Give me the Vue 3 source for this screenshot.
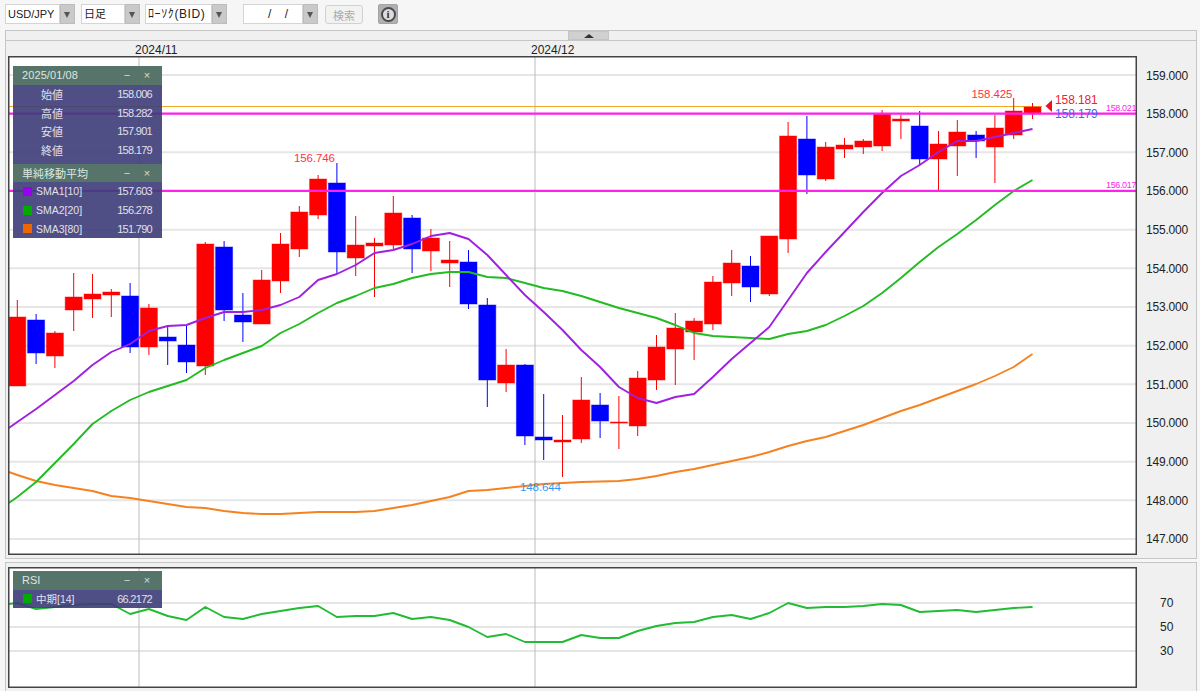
<script setup>
const step = 18.8
const xAt = (i) => 17.3 + i * step

// hi, body top, body bottom, lo, r/b  (pixel rows of the page)
const raw = [
  [300, 317, 386, 386, 'r'], [314, 320, 353, 364, 'b'], [331, 333, 356, 368, 'r'], [273, 297, 310, 331, 'r'],
  [274, 294, 299, 318, 'r'], [289, 292, 295, 317, 'r'], [283, 296, 347, 353, 'b'], [304, 308, 347, 355, 'r'],
  [325, 337, 341, 365, 'b'], [326, 345, 362, 373, 'b'], [242, 244, 366, 375, 'r'], [241, 247, 310, 321, 'b'],
  [293, 315, 322, 342, 'b'], [270, 280, 324, 324, 'r'], [233, 244, 281, 293, 'r'], [206, 212, 249, 257, 'r'],
  [175, 179, 215, 219, 'r'], [163, 183, 252, 274, 'b'], [216, 245, 258, 276, 'r'], [238, 243, 246, 297, 'r'],
  [196, 213, 245, 249, 'r'], [215, 218, 249, 273, 'b'], [229, 238, 251, 271, 'r'], [241, 260, 263, 287, 'r'],
  [250, 262, 304, 309, 'b'], [298, 305, 380, 407, 'b'], [349, 365, 383, 392, 'r'], [364, 365, 436, 445, 'b'],
  [394, 437, 440, 460, 'b'], [415, 440, 442, 477, 'r'], [377, 400, 439, 443, 'r'], [393, 405, 421, 438, 'b'],
  [396, 422, 423, 449, 'r'], [371, 378, 426, 436, 'r'], [335, 347, 380, 390, 'r'], [313, 328, 349, 385, 'r'],
  [318, 321, 332, 360, 'r'], [276, 282, 324, 330, 'r'], [250, 263, 283, 296, 'r'], [256, 266, 287, 302, 'b'],
  [236, 236, 294, 296, 'r'], [122, 136, 239, 253, 'r'], [116, 139, 175, 194, 'b'], [142, 147, 179, 181, 'r'],
  [138, 145, 149, 158, 'r'], [139, 141, 147, 154, 'r'], [110, 114, 146, 151, 'r'], [115, 119, 121, 139, 'r'],
  [111, 126, 159, 165, 'b'], [131, 144, 159, 191, 'r'], [120, 132, 146, 176, 'r'], [131, 135, 141, 158, 'b'],
  [115, 128, 147, 183, 'r'], [98, 111, 135, 139, 'r'], [103, 107, 113, 119, 'r']
]
const candles = raw.map((c, i) => ({
  x: xAt(i), hi: c[0], top: c[1], bot: c[2], lo: c[3],
  color: c[4] === 'r' ? '#ff0000' : '#0000ff'
}))

const toLine = (startY, ys) =>
  `8.8,${startY} ` + ys.map((y, i) => `${xAt(i).toFixed(1)},${y}`).join(' ')

const sma1 = toLine(428, [422, 409, 395, 381, 365, 352, 344, 331, 326, 325, 318, 312, 312, 310, 305, 297, 280, 274, 265, 253, 250, 244, 236, 233, 239, 255, 275, 295, 312, 330, 350, 367, 387, 398, 403, 397, 394, 377, 359, 343, 327, 300, 273, 252, 232, 212, 193, 176, 165, 152, 141, 141, 137, 133, 129])
const sma2 = toLine(503, [497, 482, 463, 444, 424, 411, 400, 392, 386, 380, 368, 360, 353, 346, 333, 324, 313, 303, 296, 288, 284, 278, 274, 272, 272, 277, 278, 283, 288, 291, 296, 302, 308, 313, 318, 325, 333, 336, 337, 338, 339, 334, 331, 325, 316, 306, 293, 278, 262, 247, 234, 220, 205, 191, 180])
const sma3 = toLine(472, [475, 481, 485, 488, 491, 496, 498, 501, 504, 507, 508, 511, 513, 514, 514, 513, 512, 512, 512, 511, 508, 505, 501, 497, 491, 490, 488, 486, 484, 483, 482, 481.5, 481, 479, 476, 472, 469, 465, 461, 457, 452, 446, 441, 437, 431, 425, 418, 411, 405, 398, 391, 384, 376, 367, 354])
const rsi = toLine(604, [603, 609, 607, 605, 604, 604, 614, 609, 616, 620, 607, 617, 619, 614, 611, 608, 606, 617, 616, 616, 613, 619, 617, 620, 627, 637, 634, 642, 642, 642, 635, 638, 638, 631, 626, 623, 622, 617, 615, 619, 613, 603, 608, 607, 607, 606, 604, 605, 612, 611, 610, 612, 610, 608, 607])

const prices = ['159.000', '158.000', '157.000', '156.000', '155.000', '154.000', '153.000', '152.000', '151.000', '150.000', '149.000', '148.000', '147.000']
const priceStep = 38.67
const gridYs = prices.map((p, i) => 75 + i * priceStep)
const rsiLevels = [603, 627, 651]

const dates = [
  { label: '2024/11', x: 139 },
  { label: '2024/12', x: 535 }
]

const ohlc = [
  { name: '始値', value: '158.006' },
  { name: '高値', value: '158.282' },
  { name: '安値', value: '157.901' },
  { name: '終値', value: '158.179' }
]
const smaRows = [
  { name: 'SMA1[10]', value: '157.603', color: '#9900ee' },
  { name: 'SMA2[20]', value: '156.278', color: '#00aa00' },
  { name: 'SMA3[80]', value: '151.790', color: '#ee6600' }
]
</script>

<template>
  <div class="page">
    <div class="toolbar">
      <div class="combo">
        <span class="combo-text w54">USD/JPY</span>
        <span class="combo-arrow"></span>
      </div>
      <div class="combo gap4">
        <span class="combo-text w44 cjk">日足</span>
        <span class="combo-arrow"></span>
      </div>
      <div class="combo gap5">
        <span class="combo-text w67 kana">ﾛｰｿｸ(BID)</span>
        <span class="combo-arrow"></span>
      </div>
      <div class="combo gap16">
        <span class="combo-text w60 center">/ &nbsp; &nbsp;/</span>
        <span class="combo-arrow"></span>
      </div>
      <button class="search">検索</button>
      <div class="info"><span class="info-ring">i</span></div>
    </div>

    <div class="panel">
      <div class="handle-row">
        <div class="handle"><span class="handle-tri"></span></div>
      </div>
      <div class="date-row">
        <span v-for="d in dates" :key="d.x" class="date" :style="{ left: d.x - 10 + 'px' }">{{ d.label }}</span>
      </div>
      <div class="chart-row">
        <svg class="chart" width="1129" height="499" viewBox="8 56 1129 499">
          <rect x="8" y="56" width="1129" height="499" fill="#fff" />
          <line v-for="y in gridYs" :key="y" x1="8" x2="1137" :y1="y" :y2="y" stroke="#e6e6e6" stroke-width="2" />
          <line v-for="d in dates" :key="d.x" :x1="d.x" :x2="d.x" y1="56" y2="555" stroke="#bcbcbc" stroke-width="1" />

          <line x1="9" x2="1042" y1="106.5" y2="106.5" stroke="#f5a623" stroke-width="1" />

          <g v-for="(c, i) in candles" :key="i">
            <line :x1="c.x" :x2="c.x" :y1="c.hi" :y2="c.lo" :stroke="c.color" stroke-width="1" />
            <rect :x="Math.max(c.x - 8.5, 9)" :y="c.top" :width="c.x - 8.5 < 9 ? c.x + 8.5 - 9 : 17" :height="c.bot - c.top"
              :fill="c.color" :stroke="c.color" stroke-opacity="0.45" stroke-width="1" />
          </g>

          <polyline :points="sma3" class="ma" stroke="#f5821f" />
          <polyline :points="sma2" class="ma" stroke="#22bb22" />
          <polyline :points="sma1" class="ma" stroke="#a020e0" />

          <line x1="9" x2="1137" y1="113.7" y2="113.7" stroke="#ff22ee" stroke-width="2.2" />
          <line x1="9" x2="1137" y1="190.8" y2="190.8" stroke="#ff22ee" stroke-width="2.2" />

          <polygon points="1045.5,106 1052,100 1052,112" fill="#ee1122" />

          <text x="294" y="162" class="note red">156.746</text>
          <text x="971.5" y="98" class="note red">158.425</text>
          <text x="520" y="491" class="note blue">148.644</text>
          <text x="1055" y="104" class="note price-red">158.181</text>
          <text x="1055" y="117.5" class="note price-blue">158.179</text>
          <text x="1106" y="111" class="tiny">158.021</text>
          <text x="1106" y="188" class="tiny">156.017</text>
          <rect x="8.75" y="56.75" width="1127.5" height="497.5" fill="none" stroke="#444" stroke-width="1.5" />
        </svg>
        <div class="axis main-axis">
          <div v-for="p in prices" :key="p" class="tick">{{ p }}</div>
        </div>

        <div class="legend main-legend">
          <div class="legend-head">
            <span class="head-title date-title">2025/01/08</span>
            <span class="head-btn">−</span>
            <span class="head-btn">×</span>
          </div>
          <div class="ohlc">
            <div v-for="r in ohlc" :key="r.name" class="legend-row">
              <span class="row-name indent">{{ r.name }}</span>
              <span class="row-val">{{ r.value }}</span>
            </div>
          </div>
          <div class="legend-head">
            <span class="head-title">単純移動平均</span>
            <span class="head-btn">−</span>
            <span class="head-btn">×</span>
          </div>
          <div v-for="r in smaRows" :key="r.name" class="legend-row">
            <span class="swatch" :style="{ background: r.color }"></span>
            <span class="row-name">{{ r.name }}</span>
            <span class="row-val">{{ r.value }}</span>
          </div>
        </div>
      </div>
    </div>

    <div class="panel rsi-panel">
      <div class="chart-row">
        <svg class="chart" width="1129" height="121" viewBox="8 567 1129 121">
          <rect x="8" y="567" width="1129" height="121" fill="#fff" />
          <line v-for="y in rsiLevels" :key="y" x1="8" x2="1137" :y1="y" :y2="y" stroke="#dcdcdc" stroke-width="1.5" />
          <line v-for="d in dates" :key="d.x" :x1="d.x" :x2="d.x" y1="567" y2="688" stroke="#bcbcbc" stroke-width="1" />
          <polyline :points="rsi" class="ma" stroke="#22bb33" />
          <rect x="8.75" y="567.75" width="1127.5" height="119.5" fill="none" stroke="#444" stroke-width="1.5" />
        </svg>
        <div class="axis rsi-axis">
          <div class="rsi-tick">70</div>
          <div class="rsi-tick">50</div>
          <div class="rsi-tick">30</div>
        </div>
        <div class="legend rsi-legend">
          <div class="legend-head">
            <span class="head-title">RSI</span>
            <span class="head-btn">−</span>
            <span class="head-btn">×</span>
          </div>
          <div class="legend-row">
            <span class="swatch" style="background: #00aa00"></span>
            <span class="row-name">中期[14]</span>
            <span class="row-val">66.2172</span>
          </div>
        </div>
      </div>
    </div>
  </div>
</template>

<style>
html, body { margin: 0; background: #f5f5f5; }
</style>

<style scoped>
.page {
  width: 1200px;
  height: 691px;
  overflow: hidden;
  background: #f6f6f6;
  font-family: "Liberation Sans", "Noto Sans CJK JP", sans-serif;
  color: #222;
}
.toolbar {
  display: flex;
  align-items: flex-start;
  height: 30px;
  padding: 4px 0 0 5px;
  box-sizing: border-box;
}
.combo { display: flex; height: 20px; }
.gap4 { margin-left: 6px; }
.gap5 { margin-left: 5px; }
.gap16 { margin-left: 16px; }
.combo-text {
  box-sizing: border-box;
  background: #fff;
  border: 1px solid #d4d4d4;
  font-size: 11px;
  line-height: 18px;
  padding-left: 2px;
  white-space: nowrap;
  overflow: hidden;
}
.w54 { width: 55px; }
.w44 { width: 44px; }
.w67 { width: 67px; }
.w60 { width: 60px; }
.center { text-align: center; padding-left: 10px; font-size: 12px; }
.cjk { font-size: 11px; }
.kana { font-size: 12px; letter-spacing: 0.6px; }
.combo-arrow {
  position: relative;
  width: 15px;
  background: #c9c9c9;
  border: 1px solid #bdbdbd;
  box-sizing: border-box;
}
.combo-arrow::after {
  content: "";
  position: absolute;
  left: 3px;
  top: 7px;
  border-left: 3.5px solid transparent;
  border-right: 3.5px solid transparent;
  border-top: 6px solid #555;
}
.search {
  margin: 1px 0 0 7px;
  width: 38px;
  height: 19px;
  padding: 0;
  background: #f2f2f2;
  border: 1px solid #d2d2d2;
  border-radius: 3px;
  color: #aaa;
  font-family: inherit;
  font-size: 11px;
}
.info {
  display: flex;
  align-items: center;
  justify-content: center;
  margin-left: 15px;
  width: 20px;
  height: 20px;
  background: #b0b0b0;
  border: 1px solid #a4a4a4;
  border-radius: 2px;
  box-sizing: border-box;
}
.info-ring {
  width: 15px;
  height: 15px;
  box-sizing: border-box;
  border: 2px solid #4a4a4a;
  border-radius: 50%;
  background: #ddd;
  color: #333;
  font: bold 11px/11px "Liberation Serif", serif;
  text-align: center;
}
.panel {
  width: 1192px;
  margin-left: 5px;
  box-sizing: border-box;
  background: #f0f0f0;
  border: 1px solid #c6c6c6;
  height: 529px;
}
.handle-row {
  display: flex;
  height: 9px;
  padding-left: 562px;
  border-bottom: 1px solid #c6c6c6;
}
.handle {
  display: flex;
  align-items: center;
  justify-content: center;
  width: 41px;
  background: #d0d0d0;
  border: 1px solid #c4c4c4;
  box-sizing: border-box;
}
.handle-tri {
  border-left: 5px solid transparent;
  border-right: 5px solid transparent;
  border-bottom: 4px solid #333;
}
.date-row {
  position: relative;
  height: 15px;
}
.date {
  position: absolute;
  bottom: -1px;
  font-size: 12px;
  line-height: 14px;
  color: #222;
}
.chart-row {
  position: relative;
  display: flex;
  padding-left: 2px;
}
.chart { display: block; flex: none; }
.axis { flex: 1; font-size: 12px; color: #222; }
.main-axis { padding-top: 12.5px; }
.tick {
  height: 38.67px;
  box-sizing: border-box;
  padding-left: 9px;
  line-height: 15px;
  letter-spacing: -0.2px;
}
.rsi-panel {
  height: 200px;
  margin-top: 3px;
  padding-top: 4px;
  border-bottom: none;
}
.rsi-axis { padding: 28.5px 0 0 23px; }
.rsi-tick { height: 24px; line-height: 15px; }
.legend {
  position: absolute;
  left: 7px;
  width: 149px;
  font-size: 11px;
  color: #e0e0ea;
  background: rgba(60, 60, 120, 0.9);
}
.main-legend { top: 10px; }
.rsi-legend { top: 4px; }
.legend-head {
  display: flex;
  align-items: center;
  height: 18.6px;
  padding: 0 5px 0 9px;
  background: rgba(86, 118, 104, 0.96);
  color: #dfe6e2;
}
.head-title { flex: 1; font-size: 11px; }
.date-title { letter-spacing: 0.1px; }
.head-btn {
  width: 20px;
  text-align: center;
  font-size: 11px;
  color: #d5dcd8;
}
.ohlc { padding-bottom: 4.2px; }
.legend-row {
  display: flex;
  align-items: center;
  height: 18.7px;
  padding: 0 10px;
}
.row-name { flex: 1; white-space: nowrap; font-size: 10.5px; }
.indent { padding-left: 18px; font-size: 11px; }
.row-val { letter-spacing: -0.7px; font-size: 11px; }
.swatch {
  width: 9px;
  height: 9px;
  margin-right: 4px;
  flex: none;
}
.ma {
  fill: none;
  stroke-width: 1.9;
  stroke-linejoin: round;
}
.note { font-size: 11.5px; letter-spacing: -0.1px; }
.red { fill: #ff3344; }
.blue { fill: #3399ee; }
.price-red { font-size: 12px; fill: #ee2233; }
.price-blue { font-size: 12px; fill: #4466ee; }
.tiny { font-size: 9px; fill: #ff22ee; letter-spacing: -0.35px; }
</style>
